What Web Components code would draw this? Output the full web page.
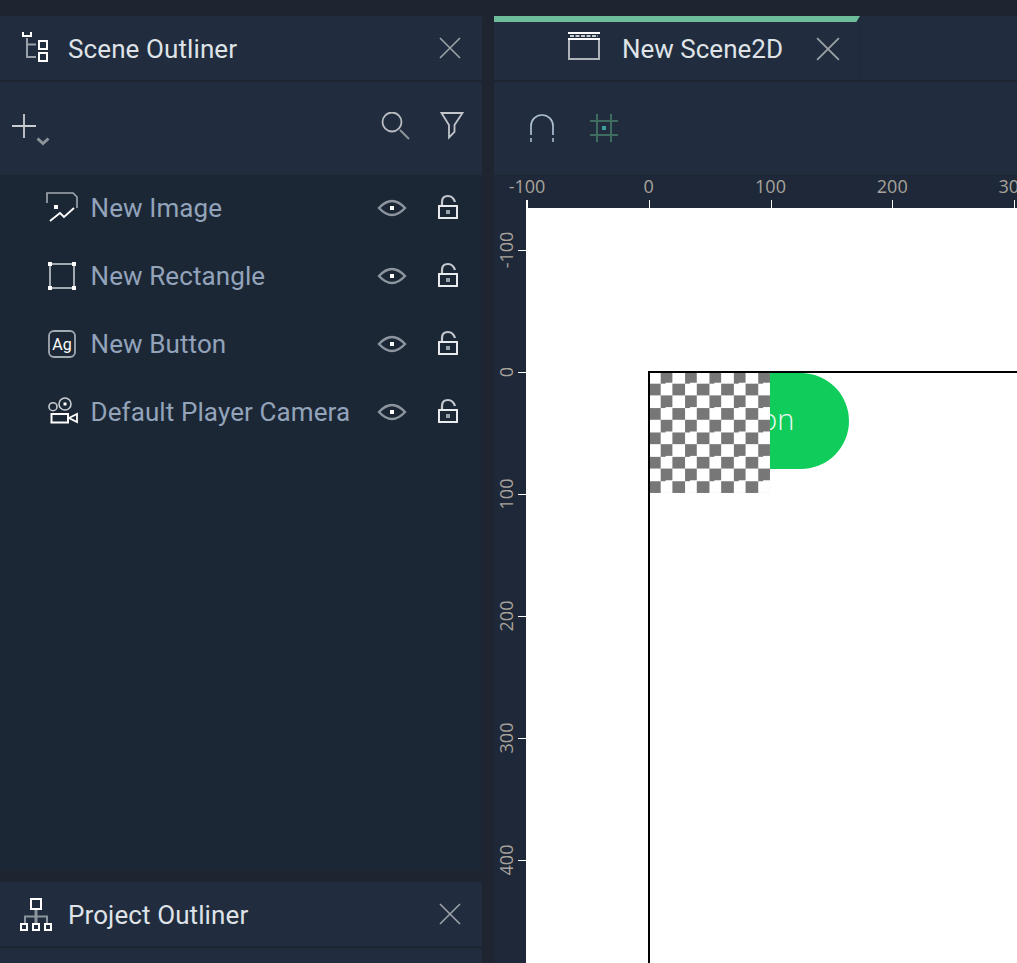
<!DOCTYPE html>
<html>
<head>
<meta charset="utf-8">
<title>Scene editor</title>
<style>
  html, body { margin: 0; height: 100%; background: #1e2531; overflow: hidden; }
</style>
</head>
<body>
<editor-shell>
  <div slot="left">
    <panel-header label="Scene Outliner" icon="tree"></panel-header>
    <outliner-tools></outliner-tools>
    <outliner-list>
      <outliner-row label="New Image" icon="image"></outliner-row>
      <outliner-row label="New Rectangle" icon="rect"></outliner-row>
      <outliner-row label="New Button" icon="button"></outliner-row>
      <outliner-row label="Default Player Camera" icon="camera"></outliner-row>
    </outliner-list>
    <panel-header label="Project Outliner" icon="project"></panel-header>
  </div>
  <div slot="right">
    <scene-tabs label="New Scene2D"></scene-tabs>
    <scene-tools></scene-tools>
    <scene-viewport></scene-viewport>
  </div>
</editor-shell>

<script>
const ICONS = {
  tree: `<svg width="32" height="32" viewBox="0 0 32 32" fill="none">
    <path d="M3 0V4H11V0" stroke="#fff" stroke-width="2"/>
    <path d="M7 6V26M7 12.500H16M7 25H16" stroke="#9aa1aa" stroke-width="2"/>
    <rect x="19" y="9" width="8" height="8" stroke="#fff" stroke-width="2"/>
    <rect x="19" y="21" width="8" height="8" stroke="#fff" stroke-width="2"/>
  </svg>`,
  project: `<svg width="32" height="34" viewBox="0 0 32 34" fill="none">
    <path d="M16 13V26" stroke="#8c949d" stroke-width="3"/>
    <path d="M5 26V19.500H27V26" stroke="#8c949d" stroke-width="2"/>
    <rect x="11" y="2" width="10" height="10" stroke="#fff" stroke-width="2"/>
    <rect x="1" y="27" width="6" height="6" stroke="#fff" stroke-width="2"/>
    <rect x="13" y="27" width="6" height="6" stroke="#fff" stroke-width="2"/>
    <rect x="25" y="27" width="6" height="6" stroke="#fff" stroke-width="2"/>
  </svg>`,
  close: `<svg width="22" height="22" viewBox="0 0 22 22" fill="none">
    <path d="M1 1L21 21M21 1L1 21" stroke="#9da2a8" stroke-width="1.6"/>
  </svg>`,
  image: `<svg width="32" height="32" viewBox="0 0 32 32" fill="none">
    <path d="M1 11V1H27L31 5V16" stroke="#a3a9b1" stroke-width="1.6"/>
    <path d="M4 29L14 21L18 25L28 16" stroke="#fff" stroke-width="1.8"/>
    <rect x="8" y="13" width="4" height="4" fill="#fff"/>
  </svg>`,
  rect: `<svg width="28" height="28" viewBox="0 0 28 28" fill="none">
    <rect x="2" y="2" width="24" height="24" stroke="#a3a9b1" stroke-width="2"/>
    <path d="M0 0h4v4H0zM24 0h4v4h-4zM0 24h4v4H0zM24 24h4v4h-4z" fill="#fff"/>
  </svg>`,
  button: `<svg width="28" height="28" viewBox="0 0 28 28" fill="none">
    <rect x="1" y="1" width="26" height="26" rx="5" stroke="#a3a9b1" stroke-width="1.8"/>
    <text x="14" y="19.500" text-anchor="middle" font-family="Roboto, sans-serif" font-size="16" fill="#fff">Ag</text>
  </svg>`,
  camera: `<svg width="32" height="30" viewBox="0 0 32 30" fill="none">
    <circle cx="7" cy="9.700" r="4" stroke="#c9cdd2" stroke-width="1.6"/>
    <circle cx="19" cy="7" r="6" stroke="#c9cdd2" stroke-width="1.6"/>
    <rect x="17.500" y="5.500" width="3" height="3" fill="#fff"/>
    <rect x="5.500" y="17" width="16.500" height="8.500" stroke="#fff" stroke-width="2"/>
    <path d="M23 21L31 17V25Z" stroke="#fff" stroke-width="1.8"/>
  </svg>`,
  eye: `<svg width="30" height="18" viewBox="0 0 30 18" fill="none">
    <path d="M2 9Q15 -5 28 9Q15 23 2 9Z" stroke="#8d969f" stroke-width="2.400"/>
    <rect x="13" y="7" width="4" height="4" fill="#fff"/>
  </svg>`,
  lock: `<svg width="24" height="28" viewBox="0 0 24 28" fill="none">
    <path d="M6 11V8Q6 2 12 2Q17 2 19 8" stroke="#c4c8cd" stroke-width="2.200"/>
    <rect x="3" y="12" width="18" height="12" stroke="#e8eaed" stroke-width="2"/>
    <rect x="10" y="16" width="4" height="4" fill="#9ba1a8"/>
  </svg>`,
  plus: `<svg width="38" height="34" viewBox="0 0 38 34" fill="none">
    <path d="M12 0V24M0 12H24" stroke="#c9ccd0" stroke-width="1.8"/>
    <path d="M25.500 24.500L31 29.500L36.500 24.500" stroke="#8d939a" stroke-width="3"/>
  </svg>`,
  search: `<svg width="30" height="30" viewBox="0 0 30 30" fill="none">
    <circle cx="11" cy="10" r="9.500" stroke="#b9bdc2" stroke-width="1.8"/>
    <path d="M19 18L28 27" stroke="#8d939a" stroke-width="2"/>
  </svg>`,
  filter: `<svg width="24" height="28" viewBox="0 0 24 28" fill="none">
    <path d="M1.500 1H22.500L14.500 13V20L9 25.500V13Z" stroke="#c2c6cb" stroke-width="1.8"/>
  </svg>`,
  clapper: `<svg width="32" height="28" viewBox="0 0 32 28" fill="none">
    <path d="M1 7V27H31V7" stroke="#aeb3ba" stroke-width="2"/>
    <path d="M0 1H32M0 7H32" stroke="#fff" stroke-width="2"/>
    <path d="M2 4H30" stroke="#c7cbd0" stroke-width="2" stroke-dasharray="4 1.500"/>
  </svg>`,
  magnet: `<svg width="24" height="28" viewBox="0 0 24 28" fill="none">
    <path d="M1 21V12A11 11 0 0 1 23 12V21" stroke="#aebfd3" stroke-width="1.700"/>
    <path d="M1 24V28M23 24V28" stroke="#9fb0c4" stroke-width="1.700"/>
  </svg>`,
  grid: `<svg width="28" height="28" viewBox="0 0 28 28" fill="none">
    <path d="M7 0V28M21 0V28M0 7H28M0 21H28" stroke="#3f6c60" stroke-width="2"/>
    <rect x="12" y="12" width="4" height="4" fill="#3ba0a0"/>
  </svg>`
};

// small helper so every element below only has to give its markup
class ShadowElement extends HTMLElement {
  connectedCallback() {
    if (this.shadowRoot) {
      return;
    }
    const shadow = this.attachShadow({ mode: 'open' });
    shadow.innerHTML = this.render();
  }
}

class EditorShell extends ShadowElement {
  render() {
    return `
      <style>
        :host {
          display: grid;
          grid-template-columns: 482px 1fr;
          column-gap: 12px;
          height: 963px;
          padding-top: 16px;
          box-sizing: border-box;
          overflow: hidden;
          font-family: Roboto, sans-serif;
        }
        ::slotted(div) {
          display: flex;
          flex-direction: column;
          min-width: 0;
          height: 947px;
          overflow: hidden;
        }
      </style>
      <slot name="left"></slot>
      <slot name="right"></slot>
    `;
  }
}

class PanelHeader extends ShadowElement {
  render() {
    const icon = this.getAttribute('icon');
    return `
      <style>
        :host {
          display: block;
          flex: none;
        }
        .bar {
          display: flex;
          align-items: center;
          height: 64px;
          padding: 0 21px 0 20px;
          background: #212d3e;
          border-radius: 0 3px 0 0;
          color: #dfe3e8;
          font-size: 26px;
          letter-spacing: 0.1px;
        }
        .icon {
          display: flex;
          width: 32px;
          margin-right: 16px;
        }
        .label {
          flex: 1;
          padding-top: 1px;
        }
        .close {
          display: flex;
        }
        .next {
          height: 15px;
          margin-top: 2px;
          background: #212d3e;
          border-radius: 0 3px 0 0;
        }
      </style>
      <div class="bar">
        <span class="icon">${ICONS[icon]}</span>
        <span class="label">${this.getAttribute('label')}</span>
        <span class="close">${ICONS.close}</span>
      </div>
      ${icon === 'project' ? '<div class="next"></div>' : ''}
    `;
  }
}

class OutlinerTools extends ShadowElement {
  render() {
    return `
      <style>
        :host {
          display: flex;
          flex: none;
          align-items: center;
          height: 93px;
          margin-top: 2px;
          padding: 0 18px 0 12px;
          background: #212d3e;
          border-radius: 0 3px 0 0;
        }
        .plus {
          display: flex;
          margin-top: 5px;
          margin-right: auto;
        }
        .search {
          display: flex;
          margin-right: 29px;
          margin-bottom: 3px;
        }
        .filter {
          display: flex;
          margin-bottom: 5px;
        }
      </style>
      <span class="plus">${ICONS.plus}</span>
      <span class="search">${ICONS.search}</span>
      <span class="filter">${ICONS.filter}</span>
    `;
  }
}

class OutlinerList extends ShadowElement {
  render() {
    return `
      <style>
        :host {
          display: flex;
          flex: none;
          flex-direction: column;
          gap: 4px;
          height: 694px;
          margin-top: 1px;
          margin-bottom: 12px;
          background: #1c2736;
        }
      </style>
      <slot></slot>
    `;
  }
}

class OutlinerRow extends ShadowElement {
  render() {
    return `
      <style>
        :host {
          display: flex;
          align-items: center;
          height: 64px;
          padding-left: 46px;
          padding-right: 22px;
          color: #92a3ba;
          font-size: 26px;
          letter-spacing: 0.1px;
        }
        .icon {
          display: flex;
          justify-content: center;
          width: 32px;
          margin-right: 12.500px;
        }
        .label {
          flex: 1;
          white-space: nowrap;
        }
        .eye {
          display: flex;
          margin-right: 29px;
        }
        .lock {
          display: flex;
        }
      </style>
      <span class="icon">${ICONS[this.getAttribute('icon')]}</span>
      <span class="label">${this.getAttribute('label')}</span>
      <span class="eye">${ICONS.eye}</span>
      <span class="lock">${ICONS.lock}</span>
    `;
  }
}

class SceneTabs extends ShadowElement {
  render() {
    return `
      <style>
        :host {
          display: block;
          flex: none;
          height: 64px;
          background: #212d3e;
        }
        .tab {
          position: relative;
          display: flex;
          align-items: center;
          box-sizing: border-box;
          width: 366px;
          height: 64px;
          padding-left: 74px;
          padding-top: 2px;
          border-right: 1px solid #1e2837;
          color: #dfe3e8;
          font-size: 26px;
        }
        .tab::before {
          content: "";
          position: absolute;
          left: 0;
          top: 0;
          width: 366px;
          height: 6px;
          background: #6dbd9c;
          clip-path: polygon(0 0, 100% 0, 99% 100%, 0 100%);
        }
        .icon {
          display: flex;
          margin-right: 22px;
          margin-bottom: 6px;
        }
        .close {
          display: flex;
          margin-left: 33px;
        }
        .close svg {
          width: 24px;
          height: 24px;
        }
      </style>
      <div class="tab">
        <span class="icon">${ICONS.clapper}</span>
        <span>${this.getAttribute('label')}</span>
        <span class="close">${ICONS.close}</span>
      </div>
    `;
  }
}

class SceneTools extends ShadowElement {
  render() {
    return `
      <style>
        :host {
          display: flex;
          flex: none;
          align-items: center;
          gap: 36px;
          box-sizing: border-box;
          height: 93px;
          margin-top: 2px;
          padding-left: 36px;
          padding-bottom: 1px;
          background: #212d3e;
        }
        span {
          display: flex;
        }
      </style>
      <span>${ICONS.magnet}</span>
      <span>${ICONS.grid}</span>
    `;
  }
}

class SceneRuler extends ShadowElement {
  render() {
    const vertical = this.hasAttribute('vertical');
    const step = vertical ? 122 : 121.750;
    const first = vertical ? 42 : 33;
    const count = vertical ? 6 : 5;
    const marks = [];
    for (let i = 0; i < count; i++) {
      const at = first + i * step;
      const value = (i - 1) * 100;
      if (vertical) {
        marks.push(`<rect x="24" y="${Math.round(at)}" width="8" height="1" fill="#fff"/>`);
        marks.push(`<text transform="translate(19 ${at}) rotate(-90)" text-anchor="middle">${value}</text>`);
      } else {
        marks.push(`<rect x="${Math.round(at) - (i === 0 ? 1 : 0)}" y="24" width="${i === 0 ? 2 : 1}" height="8" fill="#fff"/>`);
        marks.push(`<text x="${at}" y="17" text-anchor="middle">${value}</text>`);
      }
    }
    const size = vertical ? 'width="32" height="755"' : 'width="523" height="32"';
    return `
      <style>
        :host {
          display: block;
          background: #1e2838;
        }
        svg {
          display: block;
          overflow: visible;
        }
        text {
          font-family: "Open Sans", sans-serif;
          font-size: 18px;
          fill: #a8a39c;
        }
      </style>
      <svg ${size}>${marks.join('')}</svg>
    `;
  }
}

class SceneViewport extends ShadowElement {
  render() {
    return `
      <style>
        :host {
          display: grid;
          flex: 1;
          grid-template-columns: 32px 1fr;
          grid-template-rows: 32px 1fr;
          margin-top: 1px;
          min-height: 0;
          background: #1e2838;
        }
        .top {
          grid-column: 1 / 3;
        }
        .canvas {
          position: relative;
          overflow: hidden;
          background: #fff;
        }
        .scene {
          position: absolute;
          left: 122px;
          top: 163px;
          right: -10px;
          bottom: -10px;
          border-left: 2px solid #000;
          border-top: 2px solid #000;
        }
        .button {
          position: absolute;
          left: 0;
          top: 0;
          display: flex;
          align-items: center;
          justify-content: center;
          width: 199px;
          height: 96px;
          padding-left: 1px;
          padding-bottom: 6px;
          box-sizing: border-box;
          border-radius: 0 48px 48px 0;
          background: #10cd5b;
          color: #eef9f2;
          font-family: "Open Sans", sans-serif;
          font-size: 29px;
          font-weight: 300;
        }
        .image {
          position: absolute;
          left: 0;
          top: 0;
          width: 120px;
          height: 120px;
          background: conic-gradient(#777 25%, #fff 0 50%, #777 0 75%, #fff 0) -2px -2px / 24.400px 24.400px;
        }
      </style>
      <scene-ruler class="top"></scene-ruler>
      <scene-ruler vertical></scene-ruler>
      <div class="canvas">
        <div class="scene">
          <div class="button">Button</div>
          <div class="image"></div>
        </div>
      </div>
    `;
  }
}

customElements.define('editor-shell', EditorShell);
customElements.define('panel-header', PanelHeader);
customElements.define('outliner-tools', OutlinerTools);
customElements.define('outliner-list', OutlinerList);
customElements.define('outliner-row', OutlinerRow);
customElements.define('scene-tabs', SceneTabs);
customElements.define('scene-tools', SceneTools);
customElements.define('scene-ruler', SceneRuler);
customElements.define('scene-viewport', SceneViewport);
</script>
</body>
</html>
